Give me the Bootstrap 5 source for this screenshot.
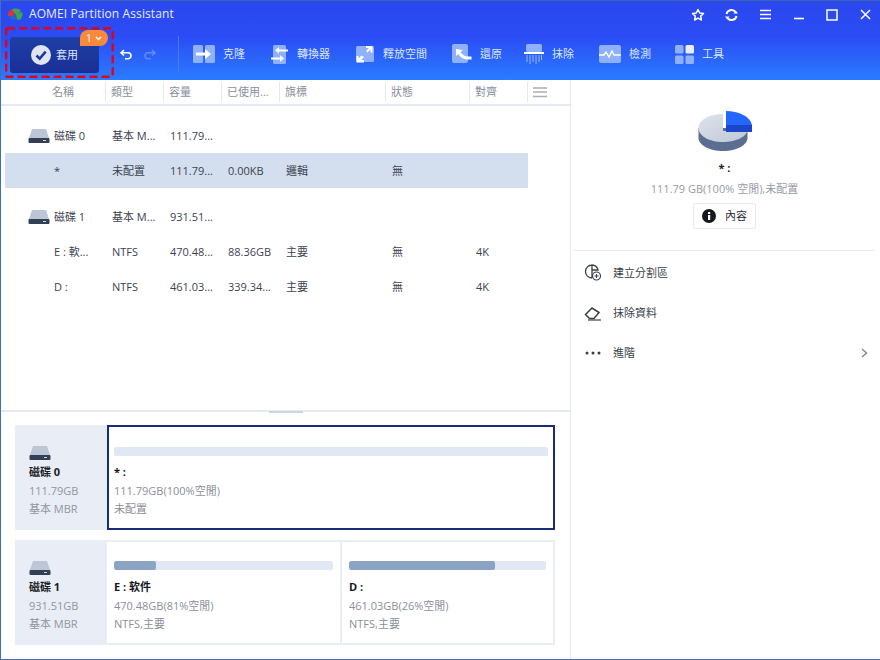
<!DOCTYPE html>
<html lang="zh-Hant">
<head>
<meta charset="utf-8">
<title>AOMEI Partition Assistant</title>
<link href="https://cdn.jsdelivr.net/npm/bootstrap@5.3.0/dist/css/bootstrap.min.css" rel="stylesheet">
<style>
html,body{margin:0;height:100%;overflow:hidden;background:#fff}
body{font-family:"Open Sans","Noto Sans CJK TC",sans-serif;font-size:11px;color:#3c4350;line-height:1.2}
.app-win{width:880px;height:660px;border:1px solid #3f6fb8;border-top-color:#3a66b0;border-right:0;position:relative}
.hdr{height:79px;background:linear-gradient(180deg,#2b47ee 0%,#2b4cf5 45%,#2a7cff 100%);color:#fff}
.titlebar{height:27px;padding-left:6px}
.app-name{font-size:12px;color:#e6ecff;margin-left:6px;letter-spacing:.1px}
.win-ctrls{margin-right:-2px}
.win-ctrl{width:33.4px;height:27px;display:flex;align-items:center;justify-content:center}
.toolbar{height:52px;position:relative}
.apply-wrap{position:absolute;left:4px;top:-1px;z-index:2}
.apply-btn{position:absolute;left:9px;top:9px;width:89px;height:36px;border-radius:3px;background:linear-gradient(180deg,#1d3fa6,#1a2f95);color:#dfe6ff;display:flex;align-items:center;gap:5px;padding-left:21px}
.apply-badge{position:absolute;left:79px;top:2px;width:28px;height:16px;background:#f98a3c;border-radius:8px 8px 8px 0;color:#fff;font-size:11px;display:flex;align-items:center;justify-content:center;gap:3px}
.tools{position:absolute;left:119px;top:0;height:52px}
.tool-item{display:flex;align-items:center;gap:8px;margin-right:25px;color:#dce6ff;font-size:11px}
.tool-tight{margin-right:22px}
.tool-snug{margin-right:24px}
.undo-set{gap:10px;width:58px}
.tool-sep{width:1px;height:36px;background:#4c78f5;margin-right:14px}
.list-pane{width:570px;border-right:1px solid #e3e8f2;height:579px}
.right-pane{width:309px;height:579px}
.list-head{height:26px;border-bottom:2px solid #e4e9f2;color:#8a909c}
.col-cell{flex:none;padding-left:5px;white-space:nowrap;overflow:hidden;height:100%;display:flex;align-items:center}
.head-cell{border-right:1px solid #e4e9f2;height:20px;margin-top:2px}
.c1{width:105px;padding-left:51px}.c2{width:58px}.c3{width:58px}.c4{width:58px}.c5{width:106px}.c6{width:84px}.c7{width:58px}.c8{width:42px}
.list-body{height:304px;padding-top:12px}
.t-row{height:35px;display:flex;margin-right:42px;align-items:center}
.t-row .col-cell{padding-left:6px}
.t-row .c1{padding-left:53px}
.t-row.sel{background:#d3dfef;margin-left:4px}
.t-row.sel .c1{width:101px;padding-left:49px}
.t-row.disk-r .c1{padding-left:27px;gap:4px}
.spacer{height:11px}
.map-area{height:247px;border-top:2px solid #e4e9f2;position:relative;padding:13px 15px 0 14px}
.grip{position:absolute;left:268px;top:-1px;width:34px;height:2px;background:#ced6e4}
.disk-map{height:105px;display:flex;background:#e9edf5;margin-bottom:10px}
.map-side{width:92px;flex:none;padding:20px 0 0 14px;color:#9096a2;background:#e9edf5;line-height:18.5px}
.map-side b{color:#1b1f26;font-weight:700;display:block;margin-top:2px}
.map-part{flex:1 1 0;background:#fff;color:#8a8f98;line-height:18.5px}
.map-sel{border:2px solid #1a2b78;padding:20px 5px 0}
.map-sel .part-track{margin-bottom:7px}
.part-outline{border:2px solid #e9edf5;border-left:0;padding:19px 7px 0}
.part-first{flex:0 0 235px}
.part-track{height:9px;background:#e1e8f3;border-radius:2px;margin-bottom:8px;overflow:hidden}
.part-fill{height:100%;background:#8ba3c4;border-radius:2px}
.map-part b{color:#14171c;font-weight:700;display:block}
.side-top{height:171px;border-bottom:1px solid #e4e9f2;margin:0 5px 0 3px;text-align:center;padding-top:30px}
.pie-name{font-size:11px;font-weight:700;color:#1a1d24;margin-top:9px;height:15px}
.pie-info{color:#969ba5;font-size:11px;margin-top:6px}
.prop-btn{width:63px;height:26px;border:1px solid #e3e8f2;border-radius:3px;margin-top:8px;padding:0;font-size:11px;color:#2a2e36;display:inline-flex;align-items:center;justify-content:center;gap:9px;background:#fff}
.act-row{height:40px;padding:0 12px 0 13px;color:#3a3f48;display:flex;align-items:center;gap:11px}
.act-list{padding-top:2px}
.act-ico{width:18px;display:flex;justify-content:center}
</style>
</head>
<body>
<div class="app-win">
  <div class="hdr">
    <div class="titlebar d-flex align-items-center">
      <svg width="16" height="14" viewBox="0 0 16 14"><path d="M1 8C0 5 3 1 7 1c2 0 3 1 3 1L6 8z" fill="#d8343a"/><path d="M5 1.500C7 0 12 0 14 3l-5 4z" fill="#4aa05a"/><path d="M9 6l6-2c1 3 0 7-3 8l-3-1z" fill="#39a84e"/><path d="M2 9l7-3 1 5c-3 2-7 1-8-2z" fill="#2f62c9"/></svg>
      <span class="app-name">AOMEI Partition Assistant</span>
      <div class="win-ctrls d-flex ms-auto">
        <div class="win-ctrl"><svg width="14" height="14" viewBox="0 0 14 14"><path d="M7 1.500l1.700 3.500 3.800.5-2.800 2.600.7 3.900L7 10.100l-3.400 1.900.7-3.900L1.500 5.500l3.800-.5z" fill="none" stroke="#fff" stroke-width="1.500" stroke-linejoin="round"/></svg></div>
        <div class="win-ctrl"><svg width="15" height="14" viewBox="0 0 15 14"><path d="M2.500 6A5 5 0 0 1 11 3.500M12.500 8A5 5 0 0 1 4 10.500" fill="none" stroke="#fff" stroke-width="2"/><path d="M9.500 5.500h4.500l-2.200-3zM5.500 8.500H1l2.200 3z" fill="#fff"/></svg></div>
        <div class="win-ctrl"><svg width="13" height="11" viewBox="0 0 13 11"><path d="M1 1.500h11M1 5.500h11M1 9.500h11" stroke="#fff" stroke-width="1.600"/></svg></div>
        <div class="win-ctrl"><svg width="12" height="11" viewBox="0 0 12 11"><path d="M1 9.500h10" stroke="#fff" stroke-width="1.600"/></svg></div>
        <div class="win-ctrl"><svg width="12" height="12" viewBox="0 0 12 12"><rect x="1" y="1" width="10" height="10" fill="none" stroke="#fff" stroke-width="1.500"/></svg></div>
        <div class="win-ctrl"><svg width="11" height="11" viewBox="0 0 11 11"><path d="M1 1l9 9M10 1l-9 9" stroke="#fff" stroke-width="1.500"/></svg></div>
      </div>
    </div>
    <div class="toolbar">
      <div class="apply-btn">
        <svg width="20" height="20" viewBox="0 0 20 20"><circle cx="10" cy="10" r="10" fill="#dfe5f2"/><path d="M5.500 10.500l3.200 3.200 6-7" fill="none" stroke="#1e3aa0" stroke-width="2.600"/></svg>
        <span>套用</span>
      </div>
      <div class="apply-badge"><span>1</span><svg width="7" height="5" viewBox="0 0 7 5"><path d="M1 1l2.500 2.500L6 1" fill="none" stroke="#fff" stroke-width="1.400"/></svg></div>
      <svg class="apply-wrap" width="109" height="51" viewBox="0 0 109 51"><rect x="1.200" y="1.200" width="106.500" height="48.500" rx="1" fill="none" stroke="#e4001b" stroke-width="2.400" stroke-dasharray="8 4"/></svg>
      <div class="tools d-flex align-items-center">
        <div class="d-flex align-items-center undo-set">
          <svg width="13" height="11" viewBox="0 0 13 11"><path d="M4 1L1 3.800 4 6.500M1.500 3.800H8a3 3 0 0 1 0 6H5" fill="none" stroke="#fff" stroke-width="1.600"/></svg>
          <svg width="13" height="11" viewBox="0 0 13 11"><path d="M9 1l3 2.800L9 6.500M11.500 3.800H5a3 3 0 0 0 0 6h3" fill="none" stroke="#5f8cf8" stroke-width="1.600"/></svg>
        </div>
        <div class="tool-sep"></div>
        <div class="tool-item">
          <svg width="22" height="18" viewBox="0 0 22 18"><rect x="0" y="0" width="10" height="18" rx="1.500" fill="#8fb0fb"/><rect x="12" y="0" width="10" height="18" rx="1.500" fill="#8fb0fb"/><path d="M3 7.500h9V4l6 5-6 5v-3.500H3z" fill="#fff"/></svg>
          <span>克隆</span>
        </div>
        <div class="tool-item">
          <svg width="19" height="19" viewBox="0 0 19 19"><rect x="3" y="0" width="13" height="19" rx="1.500" fill="#8fb0fb"/><path d="M18 4.500h-9V2L5 5.500 9 8.500V6.500h9zM1 12.500h9V10l4 3.500-4 3.500v-2.500H1z" fill="#fff"/></svg>
          <span>轉換器</span>
        </div>
        <div class="tool-item">
          <svg width="20" height="18" viewBox="0 0 20 18"><rect x="1" y="1" width="18" height="16" rx="1.500" fill="#8fb0fb"/><path d="M11 6l3-3h-3V1h6.500v6.500h-2V4.500L12.500 7.500zM9 12l-3 3h3v2.500H1.500V11h2v2.500L6.500 10.500z" fill="#fff"/></svg>
          <span>釋放空間</span>
        </div>
        <div class="tool-item tool-tight">
          <svg width="20" height="20" viewBox="0 0 20 20"><rect x="0" y="0" width="16" height="19" rx="2" fill="#8fb0fb"/><path d="M4 5v7l2.200-2c2 3 5 5.500 9.800 5.500h3.500v-3H16c-3.500 0-5.500-2-7.500-4.500L11 6z" fill="#fff"/></svg>
          <span>還原</span>
        </div>
        <div class="tool-item">
          <svg width="20" height="20" viewBox="0 0 20 20"><rect x="2" y="0" width="16" height="8" rx="1.500" fill="#8fb0fb"/><rect x="0" y="8" width="20" height="2" fill="#fff"/><path d="M3 11v7M6 11v9M9 11v7M12 11v9M15 11v7M17.500 11v5" stroke="#9bb8fb" stroke-width="1"/></svg>
          <span>抹除</span>
        </div>
        <div class="tool-item tool-snug">
          <svg width="22" height="18" viewBox="0 0 22 18"><rect x="0" y="0" width="22" height="18" rx="2" fill="#8fb0fb"/><path d="M0 10h5l2-3 3 5 3-6 2 4h7" fill="none" stroke="#fff" stroke-width="1.400"/></svg>
          <span>檢測</span>
        </div>
        <div class="tool-item">
          <svg width="19" height="19" viewBox="0 0 19 19"><rect width="8.500" height="8.500" rx="1.500" fill="#8fb0fb"/><rect x="10.500" width="8.500" height="8.500" rx="1.500" fill="#e8eefb"/><rect y="10.500" width="8.500" height="8.500" rx="1.500" fill="#8fb0fb"/><rect x="10.500" y="10.500" width="8.500" height="8.500" rx="1.500" fill="#8fb0fb"/></svg>
          <span>工具</span>
        </div>
      </div>
    </div>
  </div>
  <div class="d-flex">
    <div class="list-pane">
      <div class="list-head d-flex">
        <div class="col-cell head-cell c1">名稱</div>
        <div class="col-cell head-cell c2">類型</div>
        <div class="col-cell head-cell c3">容量</div>
        <div class="col-cell head-cell c4">已使用...</div>
        <div class="col-cell head-cell c5">旗標</div>
        <div class="col-cell head-cell c6">狀態</div>
        <div class="col-cell head-cell c7">對齊</div>
        <div class="col-cell c8"><svg width="14" height="11" viewBox="0 0 14 11"><path d="M0 1h14M0 5h14M0 9.500h14" stroke="#a6aebd" stroke-width="1.600"/></svg></div>
      </div>
      <div class="list-body">
        <div class="t-row disk-r">
          <div class="col-cell c1"><svg width="22" height="16" viewBox="0 0 22 16"><path d="M4 1h14l3 9H1z" fill="#bcc6d6"/><rect x="0.500" y="10" width="21" height="5" rx="1" fill="#333f55"/><rect x="15" y="12" width="3" height="1" fill="#cfd6e2"/></svg><span>磁碟 0</span></div>
          <div class="col-cell c2">基本 M...</div><div class="col-cell c3">111.79...</div>
        </div>
        <div class="t-row sel">
          <div class="col-cell c1">*</div><div class="col-cell c2">未配置</div><div class="col-cell c3">111.79...</div><div class="col-cell c4">0.00KB</div><div class="col-cell c5">邏輯</div><div class="col-cell c6">無</div>
        </div>
        <div class="spacer"></div>
        <div class="t-row disk-r">
          <div class="col-cell c1"><svg width="22" height="16" viewBox="0 0 22 16"><path d="M4 1h14l3 9H1z" fill="#bcc6d6"/><rect x="0.500" y="10" width="21" height="5" rx="1" fill="#333f55"/><rect x="15" y="12" width="3" height="1" fill="#cfd6e2"/></svg><span>磁碟 1</span></div>
          <div class="col-cell c2">基本 M...</div><div class="col-cell c3">931.51...</div>
        </div>
        <div class="t-row">
          <div class="col-cell c1">E : 軟...</div><div class="col-cell c2">NTFS</div><div class="col-cell c3">470.48...</div><div class="col-cell c4">88.36GB</div><div class="col-cell c5">主要</div><div class="col-cell c6">無</div><div class="col-cell c7">4K</div>
        </div>
        <div class="t-row">
          <div class="col-cell c1">D :</div><div class="col-cell c2">NTFS</div><div class="col-cell c3">461.03...</div><div class="col-cell c4">339.34...</div><div class="col-cell c5">主要</div><div class="col-cell c6">無</div><div class="col-cell c7">4K</div>
        </div>
      </div>
      <div class="map-area">
        <div class="grip"></div>
        <div class="disk-map">
          <div class="map-side"><svg width="22" height="16" viewBox="0 0 22 16" class="d-block"><path d="M4 1h14l3 9H1z" fill="#bcc6d6"/><rect x="0.500" y="10" width="21" height="5" rx="1" fill="#333f55"/><rect x="15" y="12" width="3" height="1" fill="#cfd6e2"/></svg><b>磁碟 0</b>111.79GB<br>基本 MBR</div>
          <div class="map-part map-sel">
            <div class="part-track"></div>
            <b>* :</b>111.79GB(100%空閒)<br>未配置
          </div>
        </div>
        <div class="disk-map">
          <div class="map-side"><svg width="22" height="16" viewBox="0 0 22 16" class="d-block"><path d="M4 1h14l3 9H1z" fill="#bcc6d6"/><rect x="0.500" y="10" width="21" height="5" rx="1" fill="#333f55"/><rect x="15" y="12" width="3" height="1" fill="#cfd6e2"/></svg><b>磁碟 1</b>931.51GB<br>基本 MBR</div>
          <div class="map-part part-outline part-first">
            <div class="part-track"><div class="part-fill" style="width:19%"></div></div>
            <b>E : 软件</b>470.48GB(81%空閒)<br>NTFS,主要
          </div>
          <div class="map-part part-outline">
            <div class="part-track"><div class="part-fill" style="width:74%"></div></div>
            <b>D :</b>461.03GB(26%空閒)<br>NTFS,主要
          </div>
        </div>
      </div>
    </div>
    <div class="right-pane">
      <div class="side-top">
        <svg width="54" height="42" viewBox="0 0 54 42"><defs><linearGradient id="pg" x1="0" y1="0" x2="1" y2="1"><stop offset="0" stop-color="#dfe4ec"/><stop offset="1" stop-color="#bcc7d8"/></linearGradient></defs><path d="M0.500 18v10c0 7 11 13 24.500 13s24.500-6 24.500-13V18z" fill="#5b6d90"/><path d="M25 4C11.500 4 0.500 10 0.500 18S11.500 32 25 32s24-6 24-11H25z" fill="url(#pg)"/><path d="M28 15h26v7H28z" fill="#1c46c9"/><path d="M28 1c12 0 24 5 26 14H28z" fill="#2467ff"/></svg>
        <div class="pie-name">* :</div>
        <div class="pie-info">111.79 GB(100% 空閒),未配置</div>
        <button type="button" class="btn prop-btn"><svg width="14" height="14" viewBox="0 0 14 14"><circle cx="7" cy="7" r="7" fill="#15181f"/><rect x="6" y="6" width="2.200" height="5" fill="#fff"/><rect x="6" y="3" width="2.200" height="2" fill="#fff"/></svg><span>內容</span></button>
      </div>
      <div class="act-list">
        <div class="act-row"><span class="act-ico"><svg width="18" height="18" viewBox="0 0 18 18"><path d="M8 1a6.500 6.500 0 1 0 0 13M8 1a6.500 6.500 0 0 1 6 5H8zM8 6v8" fill="none" stroke="#3a3f48" stroke-width="1.300"/><circle cx="12.500" cy="12" r="4" fill="#fff" stroke="#3a3f48" stroke-width="1.200"/><path d="M12.500 10v4M10.500 12h4" stroke="#3a3f48" stroke-width="1"/></svg></span><span>建立分割區</span></div>
        <div class="act-row"><span class="act-ico"><svg width="18" height="15" viewBox="0 0 18 15"><path d="M1.500 8.500L8 2l7 4.500-5 6H5.500z" fill="none" stroke="#3a3f48" stroke-width="1.500"/><path d="M4 14h13" stroke="#3a3f48" stroke-width="1.200"/></svg></span><span>抹除資料</span></div>
        <div class="act-row"><span class="act-ico"><svg width="16" height="4" viewBox="0 0 16 4"><circle cx="2" cy="2" r="1.500" fill="#3a3f48"/><circle cx="8" cy="2" r="1.500" fill="#3a3f48"/><circle cx="14" cy="2" r="1.500" fill="#3a3f48"/></svg></span><span>進階</span><svg class="ms-auto" width="7" height="10" viewBox="0 0 7 10"><path d="M1 1l4.500 4L1 9" fill="none" stroke="#838995" stroke-width="1.500"/></svg></div>
      </div>
    </div>
  </div>
</div>
</body>
</html>
